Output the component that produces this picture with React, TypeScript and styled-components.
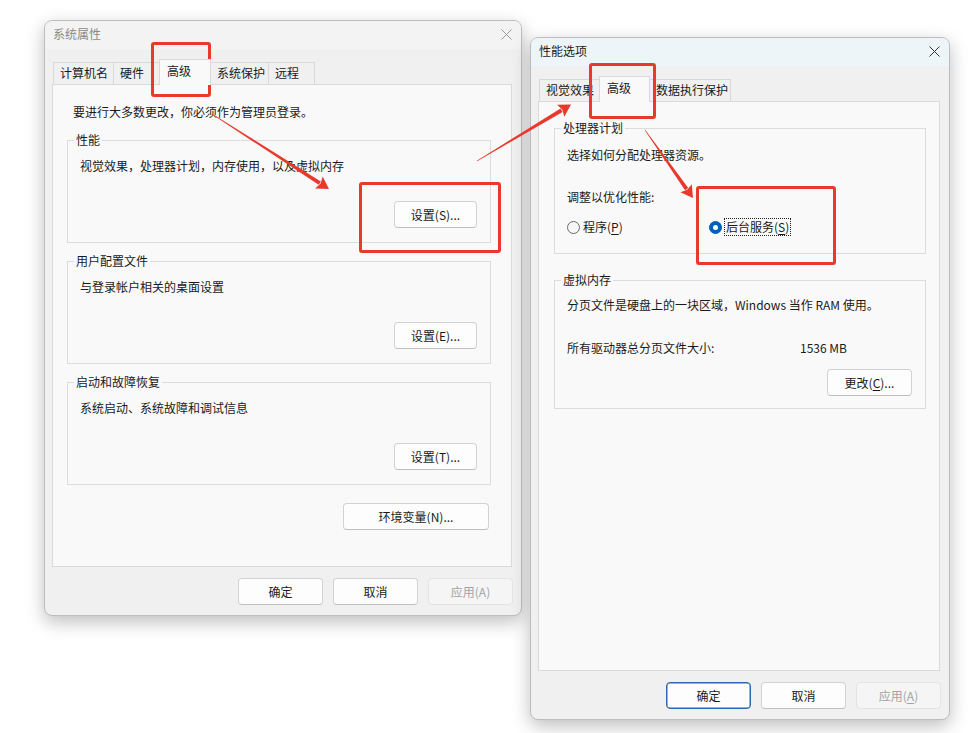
import styled, { createGlobalStyle, css } from "styled-components"

const GlobalStyle = createGlobalStyle`
  * {
    box-sizing: border-box;
  }
  html, body {
    margin: 0;
    padding: 0;
    background: #ffffff;
  }
  body {
    font-family: "Noto Sans CJK SC", "Noto Sans", sans-serif;
    font-size: 12px;
    line-height: 16px;
    color: #1a1a1a;
  }
`

type Box = { $x: number; $y: number; $w: number; $h: number }

const RED = "#e9392c"

export default function App() {
  return (
    <>
      <GlobalStyle />
      <Desktop>
        <Window $x={44} $y={20} $w={478} $h={596}>
          <TitleBar>
            <span>系统属性</span>
            <CloseIcon dim />
          </TitleBar>
          <Body>
            <TabStrip>
              <Tab $w={61}>计算机名</Tab>
              <Tab $w={49}>硬件</Tab>
              <Tab $w={52} $active>高级</Tab>
              <Tab $w={59}>系统保护</Tab>
              <Tab $w={47}>远程</Tab>
            </TabStrip>
            <Panel $pad="19px 20px 0 14px">
              <Notice>要进行大多数更改，你必须作为管理员登录。</Notice>

              <Group $mt={12}>
                <Legend>性能</Legend>
                <GroupBody $pb={14}>
                  <Line $mt={10}>视觉效果，处理器计划，内存使用，以及虚拟内存</Line>
                  <ButtonRow $mt={27}>
                    <Button $w={83}>设置(S)...</Button>
                  </ButtonRow>
                </GroupBody>
              </Group>

              <Group $mt={10}>
                <Legend>用户配置文件</Legend>
                <GroupBody $pb={14}>
                  <Line $mt={10}>与登录帐户相关的桌面设置</Line>
                  <ButtonRow $mt={27}>
                    <Button $w={83}>设置(E)...</Button>
                  </ButtonRow>
                </GroupBody>
              </Group>

              <Group $mt={10}>
                <Legend>启动和故障恢复</Legend>
                <GroupBody $pb={14}>
                  <Line $mt={10}>系统启动、系统故障和调试信息</Line>
                  <ButtonRow $mt={27}>
                    <Button $w={83}>设置(T)...</Button>
                  </ButtonRow>
                </GroupBody>
              </Group>

              <ButtonRow $mt={18} $mr={2}>
                <Button $w={146}>环境变量(N)...</Button>
              </ButtonRow>
            </Panel>
            <Footer>
              <Button $w={85}>确定</Button>
              <Button $w={85}>取消</Button>
              <Button $w={85} disabled>
                应用(A)
              </Button>
            </Footer>
          </Body>
        </Window>

        <Window $x={530} $y={37} $w={420} $h={683}>
          <TitleBar $active>
            <span>性能选项</span>
            <CloseIcon />
          </TitleBar>
          <Body>
            <TabStrip>
              <Tab $w={63}>视觉效果</Tab>
              <Tab $w={51} $active>高级</Tab>
              <Tab $w={82}>数据执行保护</Tab>
            </TabStrip>
            <Panel $pad="18px 13px 0 15px">
              <Group $mt={0}>
                <Legend>处理器计划</Legend>
                <GroupBody $pb={17}>
                  <Line $mt={11}>选择如何分配处理器资源。</Line>
                  <Line $mt={26}>调整以优化性能:</Line>
                  <RadioRow $mt={13}>
                    <RadioOption>
                      <Radio />
                      <span>
                        程序(<Key>P</Key>)
                      </span>
                    </RadioOption>
                    <RadioOption>
                      <Radio $checked />
                      <FocusLabel>
                        后台服务(<Key>S</Key>)
                      </FocusLabel>
                    </RadioOption>
                  </RadioRow>
                </GroupBody>
              </Group>

              <Group $mt={18}>
                <Legend>虚拟内存</Legend>
                <GroupBody $pb={12}>
                  <Line $mt={9}>分页文件是硬盘上的一块区域，Windows 当作 RAM 使用。</Line>
                  <InfoRow $mt={27}>
                    <span>所有驱动器总分页文件大小:</span>
                    <span>1536 MB</span>
                  </InfoRow>
                  <ButtonRow $mt={13}>
                    <Button $w={85}>
                      更改(<Key>C</Key>)...
                    </Button>
                  </ButtonRow>
                </GroupBody>
              </Group>
            </Panel>
            <Footer>
              <Button $w={85} $primary>
                确定
              </Button>
              <Button $w={85}>取消</Button>
              <Button $w={85} disabled>
                应用(<Key>A</Key>)
              </Button>
            </Footer>
          </Body>
        </Window>

        <Highlight $x={151} $y={42} $w={60} $h={55} />
        <Highlight $x={359} $y={182} $w={142} $h={71} />
        <Highlight $x={589} $y={63} $w={67} $h={56} />
        <Highlight $x={696} $y={186} $w={140} $h={79} />

        <Arrows width={979} height={733} viewBox="0 0 979 733">
          <Arrow x1={212} y1={114} x2={329} y2={189} />
          <Arrow x1={477} y1={161} x2={571} y2={104.5} />
          <Arrow x1={645} y1={130} x2={693} y2={198} />
        </Arrows>
      </Desktop>
    </>
  )
}

function CloseIcon({ dim }: { dim?: boolean }) {
  return (
    <CloseBox>
      <svg width="11" height="11" viewBox="0 0 11 11">
        <path
          d="M0.5 0.5 L10.5 10.5 M10.5 0.5 L0.5 10.5"
          stroke={dim ? "#9a9a9a" : "#333"}
          strokeWidth="1"
          fill="none"
        />
      </svg>
    </CloseBox>
  )
}

function Arrow({ x1, y1, x2, y2 }: { x1: number; y1: number; x2: number; y2: number }) {
  const len = Math.hypot(x2 - x1, y2 - y1)
  const ux = (x2 - x1) / len
  const uy = (y2 - y1) / len
  const nx = -uy
  const ny = ux
  const headLen = 12
  const headHalf = 7
  const tail = 0.6
  const neck = 4
  const bx = x2 - ux * headLen
  const by = y2 - uy * headLen
  const pts = (list: number[][]) => list.map((p) => p.map((v) => v.toFixed(1)).join(",")).join(" ")
  const shaft = [
    [x1 + (nx * tail) / 2, y1 + (ny * tail) / 2],
    [bx + ux + (nx * neck) / 2, by + uy + (ny * neck) / 2],
    [bx + ux - (nx * neck) / 2, by + uy - (ny * neck) / 2],
    [x1 - (nx * tail) / 2, y1 - (ny * tail) / 2],
  ]
  const head = [
    [x2, y2],
    [bx + nx * headHalf, by + ny * headHalf],
    [bx + ux * 2, by + uy * 2],
    [bx - nx * headHalf, by - ny * headHalf],
  ]
  return (
    <g fill={RED}>
      <polygon points={pts(shaft)} />
      <polygon points={pts(head)} />
    </g>
  )
}

const Desktop = styled.div`
  position: relative;
  width: 979px;
  height: 733px;
  overflow: hidden;
  background: #ffffff;
`

const Window = styled.div<Box>`
  position: absolute;
  left: ${(p) => p.$x}px;
  top: ${(p) => p.$y}px;
  width: ${(p) => p.$w}px;
  height: ${(p) => p.$h}px;
  display: flex;
  flex-direction: column;
  background: #f0f0f0;
  border: 1px solid #bdbdbd;
  border-radius: 8px;
  box-shadow: 0 6px 18px rgba(0, 0, 0, 0.26);
  overflow: hidden;
`

const TitleBar = styled.div<{ $active?: boolean }>`
  flex: none;
  height: 28px;
  display: flex;
  align-items: center;
  justify-content: space-between;
  padding: 0 0 2px 8px;
  background: ${(p) => (p.$active ? "#eef5f8" : "#f3f3f3")};
  color: ${(p) => (p.$active ? "#1a1a1a" : "#8a8a8a")};
`

const CloseBox = styled.div`
  width: 30px;
  height: 100%;
  display: flex;
  align-items: center;
  justify-content: center;
`

const Body = styled.div`
  flex: 1;
  min-height: 0;
  display: flex;
  flex-direction: column;
  padding: 10px 9px 10px 7px;
`

const TabStrip = styled.div`
  flex: none;
  height: 25px;
  display: flex;
  align-items: flex-end;
  padding-left: 1px;
`

const Tab = styled.div<{ $w: number; $active?: boolean }>`
  position: relative;
  width: ${(p) => p.$w}px;
  height: 22px;
  margin-left: -1px;
  padding: 2px 0 0 6px;
  border: 1px solid #d9d9d9;
  border-bottom: none;
  background: #f0f0f0;
  white-space: nowrap;
  overflow: hidden;

  &:first-child {
    margin-left: 0;
  }

  ${(p) =>
    p.$active &&
    css`
      z-index: 1;
      height: 26px;
      margin-left: -3px;
      margin-bottom: -1px;
      padding: 3px 0 0 7px;
      background: #f9f9f9;
    `}
`

const Panel = styled.div<{ $pad: string }>`
  flex: 1;
  display: flex;
  flex-direction: column;
  padding: ${(p) => p.$pad};
  background: #f9f9f9;
  border: 1px solid #dadada;
`

const Notice = styled.div`
  margin-left: 6px;
`

const Group = styled.fieldset<{ $mt: number }>`
  margin: ${(p) => p.$mt}px 0 0;
  padding: 0;
  min-width: 0;
  border: 1px solid #dcdcdc;
`

const Legend = styled.legend`
  margin-left: 6px;
  padding: 0 2px;
  line-height: 16px;
`

const GroupBody = styled.div<{ $pb: number }>`
  display: flex;
  flex-direction: column;
  padding: 0 13px ${(p) => p.$pb}px 12px;
`

const Line = styled.div<{ $mt: number }>`
  margin-top: ${(p) => p.$mt}px;
  white-space: nowrap;
`

const ButtonRow = styled.div<{ $mt: number; $mr?: number }>`
  display: flex;
  justify-content: flex-end;
  margin-top: ${(p) => p.$mt}px;
  margin-right: ${(p) => p.$mr ?? 0}px;
`

const RadioRow = styled.div<{ $mt: number }>`
  display: grid;
  grid-template-columns: 142px auto;
  align-items: center;
  margin-top: ${(p) => p.$mt}px;
`

const RadioOption = styled.div`
  display: flex;
  align-items: center;
  gap: 3px;
`

const Radio = styled.span<{ $checked?: boolean }>`
  flex: none;
  width: 13px;
  height: 13px;
  border-radius: 50%;
  display: flex;
  align-items: center;
  justify-content: center;
  border: 1px solid ${(p) => (p.$checked ? "#005fb8" : "#6b6b6b")};
  background: ${(p) => (p.$checked ? "#005fb8" : "#f7f7f7")};

  &::after {
    content: "";
    display: ${(p) => (p.$checked ? "block" : "none")};
    width: 5px;
    height: 5px;
    border-radius: 50%;
    background: #ffffff;
  }
`

const FocusLabel = styled.span`
  padding: 0 1px;
  margin-left: -1px;
  border: 1px dotted #222;
`

const Key = styled.u`
  text-decoration: underline;
  text-underline-offset: 2px;
`

const InfoRow = styled.div<{ $mt: number }>`
  display: grid;
  grid-template-columns: 233px auto;
  margin-top: ${(p) => p.$mt}px;
  white-space: nowrap;
`

const Footer = styled.div`
  flex: none;
  display: flex;
  justify-content: flex-end;
  gap: 10px;
  margin: 11px -1px 0 0;
`

const Button = styled.button<{ $w: number; $primary?: boolean }>`
  width: ${(p) => p.$w}px;
  height: 27px;
  padding: 0;
  font: inherit;
  font-size: 12px;
  line-height: 16px;
  color: #1a1a1a;
  background: #fdfdfd;
  border: 1px solid #d2d2d2;
  border-bottom-color: #bfbfbf;
  border-radius: 4px;
  white-space: nowrap;

  ${(p) =>
    p.$primary &&
    css`
      border: 1px solid #2a68ae;
      box-shadow: inset 0 0 0 0.5px #2a68ae;
    `}

  &:disabled {
    color: #a3a3a3;
    background: #f5f5f5;
    border-color: #e4e4e4;
  }
`

const Highlight = styled.div<Box>`
  position: absolute;
  left: ${(p) => p.$x}px;
  top: ${(p) => p.$y}px;
  width: ${(p) => p.$w}px;
  height: ${(p) => p.$h}px;
  border: 3px solid ${RED};
  border-radius: 3px;
  pointer-events: none;
`

const Arrows = styled.svg`
  position: absolute;
  left: 0;
  top: 0;
  pointer-events: none;
`
